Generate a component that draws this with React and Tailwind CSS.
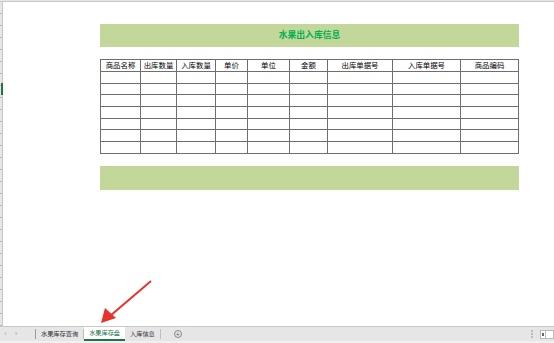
const cols = [40, 36, 39, 32, 42, 38, 65, 68, 58];
const heads = ["商品名称", "出库数量", "入库数量", "单价", "单位", "金额", "出库单据号", "入库单据号", "商品编码"];
const font = { fontFamily: '"Liberation Sans", "Noto Sans CJK SC", sans-serif' };

function Tab({ label, active }) {
  return (
    <div
      className={
        active
          ? "flex h-full items-center border-b-2 border-[#217346] bg-white px-[5px] text-[#217346]"
          : "flex h-full items-center px-[5px] text-[#333]"
      }
    >
      {label}
    </div>
  );
}

export default function App() {
  return (
    <div className="relative flex h-[343px] w-[554px] flex-col overflow-hidden bg-white" style={font}>
      <div className="h-[2px] w-full border-b border-[#c8c8c8] bg-[#e6e6e6]" />
      <div className="flex min-h-0 flex-1">
        <div className="relative w-[3px] border-r border-[#c8c8c8] bg-[repeating-linear-gradient(to_bottom,#e6e6e6_0px,#e6e6e6_11px,#b8b8b8_11px,#b8b8b8_12px)]">
          <div className="absolute left-[1px] top-[81px] h-[12px] w-[2px] bg-[#217346]" />
        </div>
        <div className="flex flex-col pl-[97px] pt-[22px]">
          <div className="flex h-[23px] w-[419px] items-center justify-center bg-[#c4d79b] text-[8.8px] font-bold text-[#00b050]">
            水果出入库信息
          </div>
          <table className="mt-[12px] w-[419px] table-fixed border-collapse text-[7.4px] text-black">
            <colgroup>
              {cols.map((w, i) => (
                <col key={i} style={{ width: w }} />
              ))}
            </colgroup>
            <thead>
              <tr className="h-[12px]">
                {heads.map((h) => (
                  <th key={h} className="border border-[#6e6e6e] p-0 text-center font-normal leading-[10px]">
                    {h}
                  </th>
                ))}
              </tr>
            </thead>
            <tbody>
              {Array.from({ length: 7 }).map((_, r) => (
                <tr key={r} className="h-[11.7px]">
                  {cols.map((_, c) => (
                    <td key={c} className="border border-[#6e6e6e] p-0" />
                  ))}
                </tr>
              ))}
            </tbody>
          </table>
          <div className="mt-[12px] h-[24px] w-[419px] bg-[#c4d79b]" />
        </div>
      </div>
      <div className="flex h-[15px] items-center border-t border-[#c8c8c8] bg-[#e6e6e6] text-[6.2px]">
        <div className="flex w-[35px] items-center gap-[8px] pl-[4px] text-[8px] text-[#aaa]">
          <span>‹</span>
          <span>›</span>
        </div>
        <div className="h-[10px] w-px bg-[#9a9a9a]" />
        <div className="flex h-full items-center">
          <Tab label="水果库存查询" />
          <div className="h-[10px] w-px bg-[#bdbdbd]" />
          <Tab label="水果库存盘" active />
          <Tab label="入库信息" />
          <div className="h-[10px] w-px bg-[#bdbdbd]" />
        </div>
        <div className="ml-[13px] flex h-[8px] w-[8px] items-center justify-center rounded-full border border-[#888] text-[7px] leading-none text-[#666]">
          +
        </div>
        <div className="ml-auto flex h-full items-center">
          <div className="mr-[7px] h-[9px] w-[2px] bg-[repeating-linear-gradient(to_bottom,#bbb_0px,#bbb_2px,transparent_2px,transparent_3px)]" />
          <div className="flex h-[9px] w-[6px] items-center justify-center border border-[#bbb] bg-white">
            <div className="h-[3px] w-[2px] bg-[#666]" />
          </div>
          <div className="h-[9px] w-[8px] border border-l-0 border-[#bbb] bg-white" />
        </div>
      </div>
      <div className="h-[2px] bg-[#f0f0f0]" />
      <svg className="absolute left-0 top-0" width="554" height="343" viewBox="0 0 554 343">
        <line x1="151" y1="281" x2="110" y2="316" stroke="#e8322b" strokeWidth="2" />
        <polygon points="101,323 105,308 116,318" fill="#e8322b" />
      </svg>
    </div>
  );
}
